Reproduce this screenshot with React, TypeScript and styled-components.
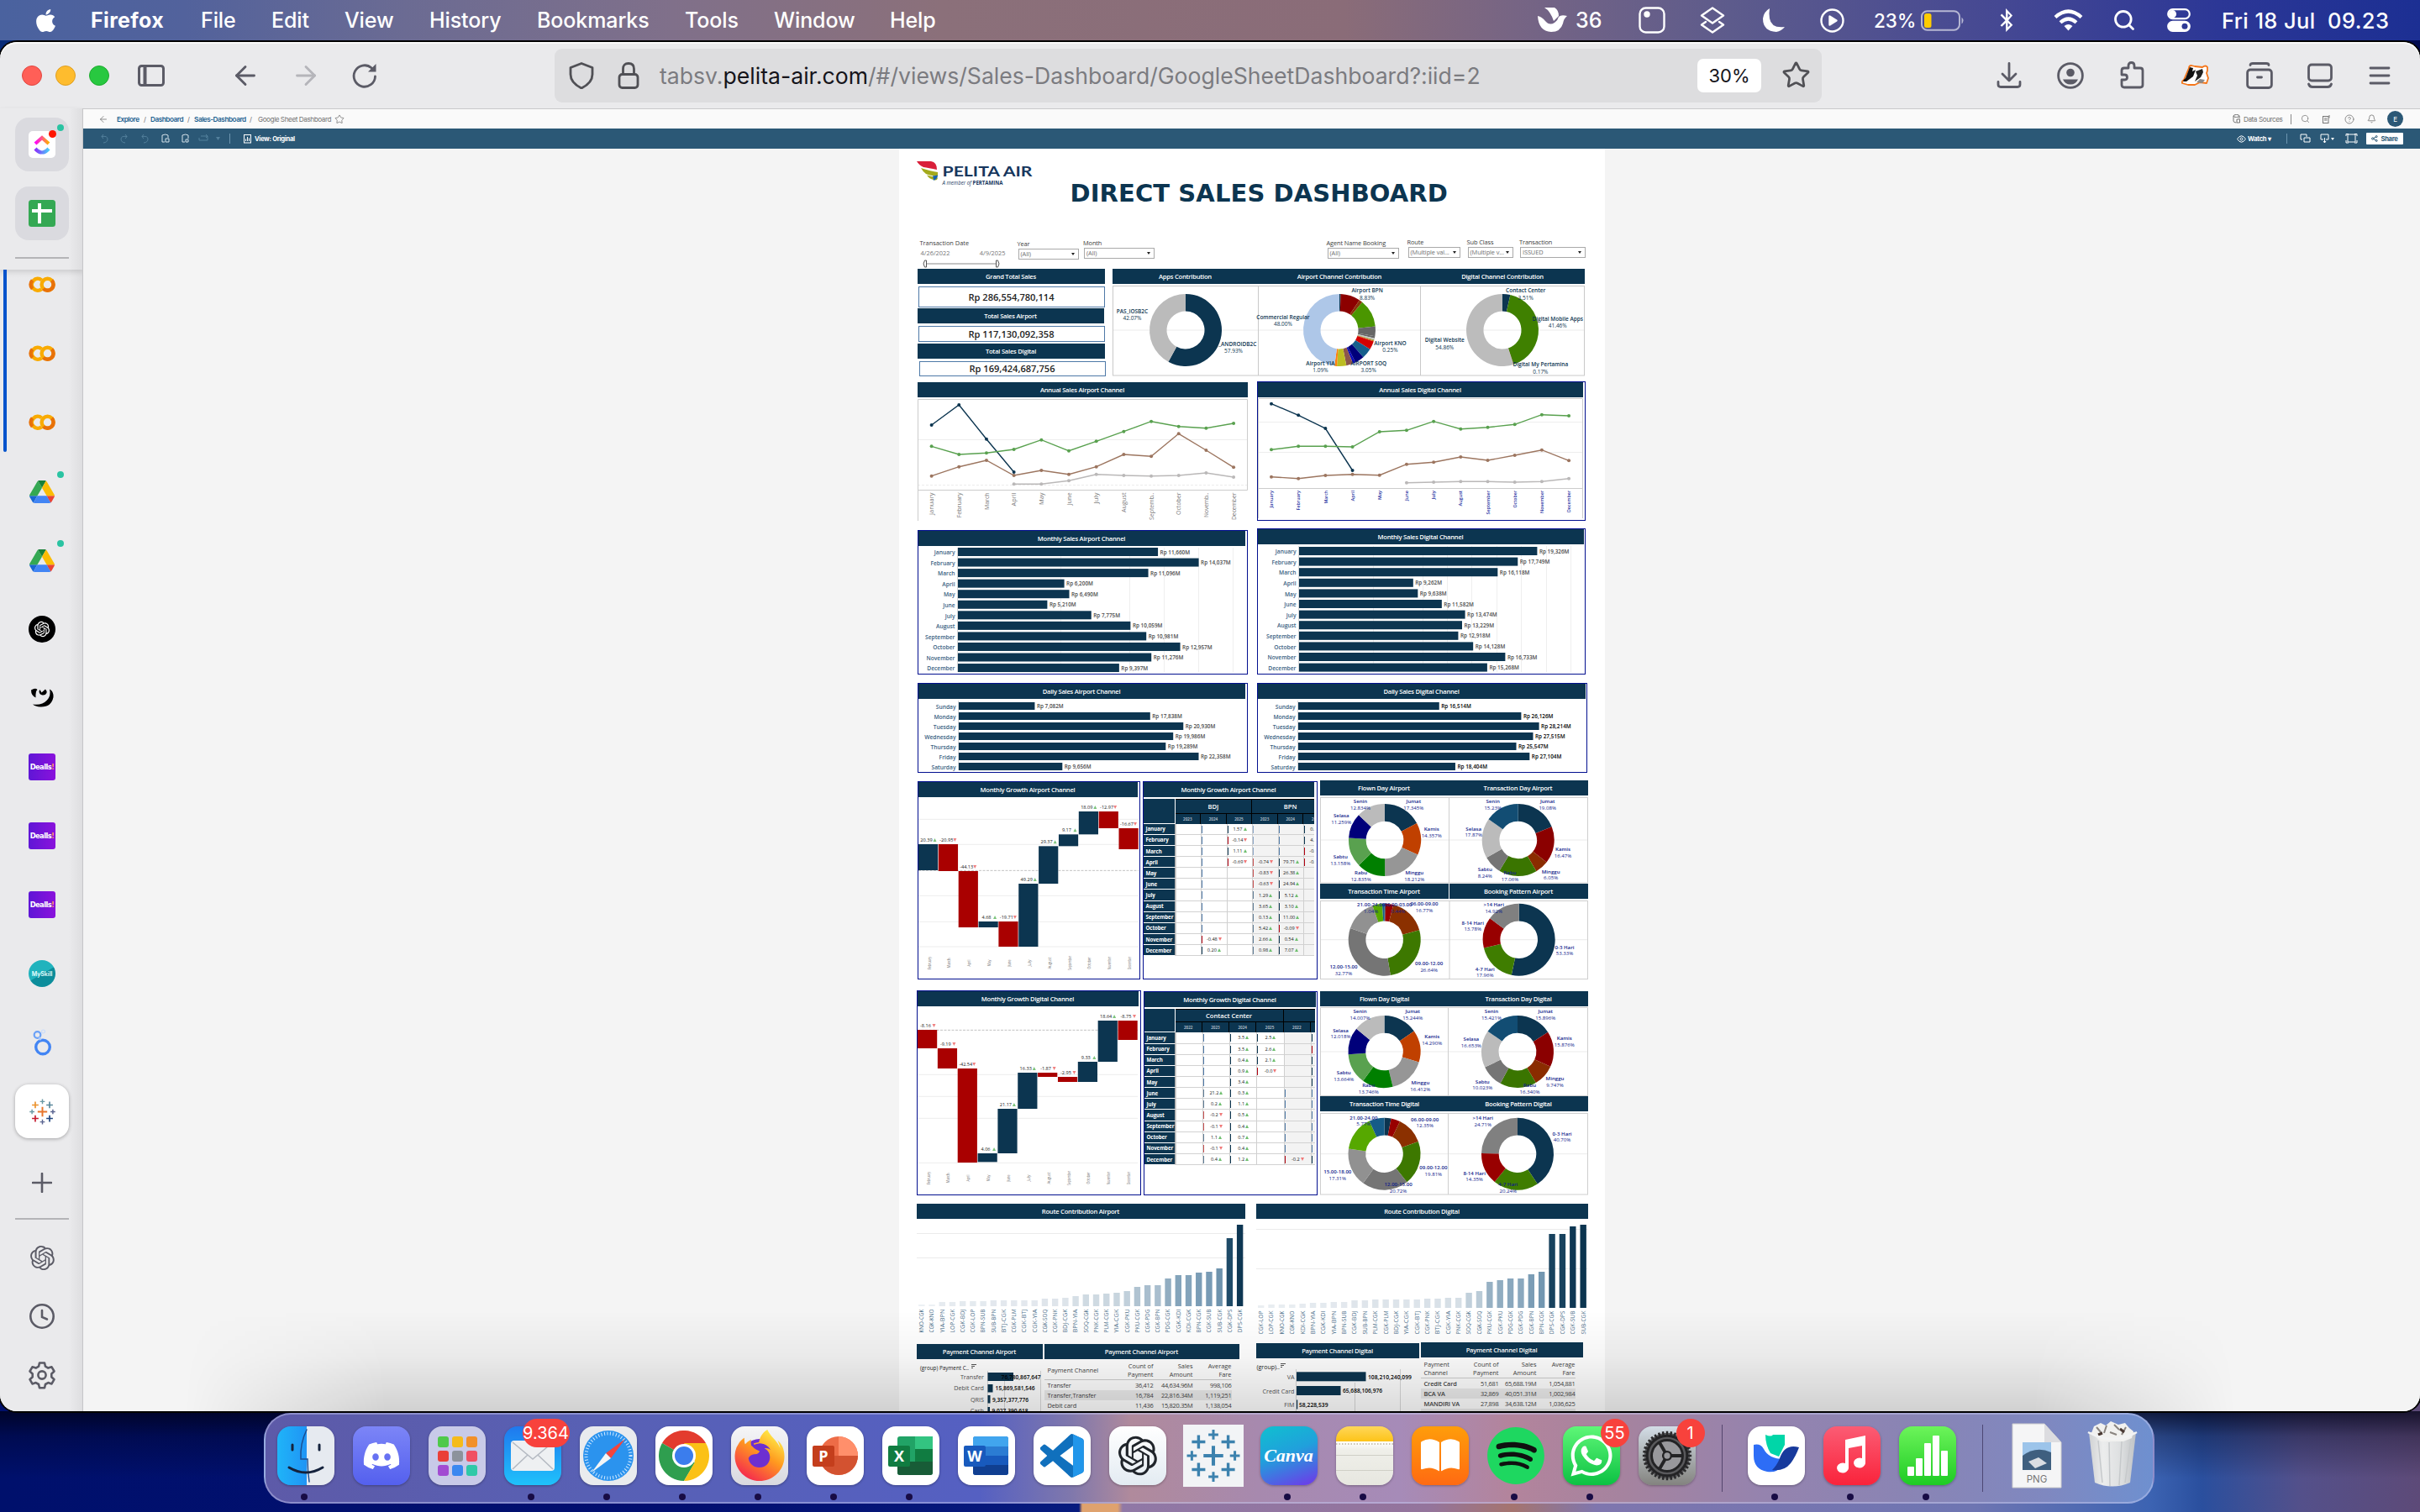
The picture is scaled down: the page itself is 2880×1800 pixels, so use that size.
import React from 'react';
import styled, { createGlobalStyle, css } from 'styled-components';
import { FaApple, FaDiscord, FaSpotify, FaWhatsapp, FaFirefoxBrowser, FaBluetoothB } from 'react-icons/fa';
import { RiOpenaiFill } from 'react-icons/ri';
import { ArrowLeft, ArrowRight, Star, CircleUserRound, Search, Bell, CircleHelp } from 'lucide-react';

const NAVY = '#0c3550';
const RED = '#a90000';
const INK = '#101c8c';
const UI = `Inter, "Liberation Sans", sans-serif`;
const VIZ = `"Open Sans", "Noto Sans", sans-serif`;

const Global = createGlobalStyle`
  * { box-sizing: border-box; }
  html, body { margin: 0; padding: 0; }
  body { width: 2880px; height: 1800px; overflow: hidden; font-family: ${UI}; }
  svg { display: block; }
`;

/* ---------- desktop ---------- */

const Desktop = styled.div`
  width: 2880px;
  height: 1800px;
  display: flex;
  flex-direction: column;
  overflow: hidden;
  background:
    linear-gradient(180deg, rgba(0, 0, 20, 0.75), rgba(0, 0, 20, 0.3) 30%, transparent 80%) 0 1680px / 100% 100px no-repeat,
    linear-gradient(90deg, #00106c 0, #020f70 800px, #071b7e 1284px, #dfa26e 1288px, #dfa26e 1330px, #9078a6 1336px, #94749c 1700px, #a5746f 1800px, #7f76ae 1900px, #6e75b2 2350px, #3c63b2 2560px, #2a4f9e 2620px, #54508a 2740px, #5d4a78 2880px) 0 1660px / 100% 140px no-repeat,
    linear-gradient(90deg, #062a78, #12356b 1100px, #7a4a2c 1130px, #7a4a2c 1900px, #0a2a66 1920px, #000a50);
`;

const MenuBar = styled.div`
  height: 48px;
  flex: none;
  display: flex;
  align-items: center;
  color: #fff;
  font-size: 25px;
  background: linear-gradient(90deg, #4a629f 0, #52629c 220px, #6b6b93 480px, #80708a 800px, #8b707a 1120px, #8a6c78 1600px, #776584 1800px, #5d5b8c 2060px, #454893 2380px, #2c3796 2640px, #1c2f93 2880px);
`;

const MenuItem = styled.span<{ $w: number; $bold?: boolean }>`
  width: ${p => p.$w}px;
  flex: none;
  white-space: pre;
  font-weight: ${p => (p.$bold ? 700 : 500)};
  letter-spacing: ${p => (p.$bold ? '0.35px' : '-0.1px')};
`;

const Slot = styled.span<{ $w: number; $pad?: number }>`
  width: ${p => p.$w}px;
  flex: none;
  display: flex;
  align-items: center;
  white-space: pre;
  font-weight: 500;
  padding-left: ${p => p.$pad ?? 0}px;
`;
const Clock = styled(Slot)`
  font-size: 25.500px;
  letter-spacing: 0.4px;
`;
const Percent = styled(Slot)`
  font-size: 22.500px;
`;
const Push = styled.span`flex: 1;`;

const Window = styled.div`
  margin-top: 2px;
  height: 1630px;
  flex: none;
  display: flex;
  flex-direction: column;
  background: #eaeaec;
  border-radius: 20px;
  overflow: hidden;
  box-shadow: 0 0 0 2px #000, inset 0 2px 0 #fafafa;
  position: relative;
`;

const Toolbar = styled.div`
  height: 79px;
  flex: none;
  display: flex;
  align-items: center;
  color: #5b5b66;
`;
const Light = styled.i<{ $c: string; $b: string }>`
  width: 24px;
  height: 24px;
  margin-right: 16px;
  border-radius: 50%;
  background: ${p => p.$c};
  border: 1px solid ${p => p.$b};
`;
const Lights = styled.div`
  display: flex;
  width: 164px;
  padding-left: 26px;
`;
const NavButtons = styled.div`
  width: 464px;
  flex: none;
  display: flex;
  align-items: center;
  padding-left: 78px;
  gap: 36px;
`;
const Forward = styled.span`
  color: #b5b5ba;
`;
const UrlBar = styled.div`
  width: 1508px;
  height: 64px;
  flex: none;
  display: flex;
  align-items: center;
  border-radius: 9px;
  background: #dddddf;
  color: #7b7b80;
  font-size: 26.600px;
`;
const UrlText = styled.span`
  flex: 1;
  padding-left: 13px;
  white-space: nowrap;
  b { font-weight: 400; color: #15141a; }
`;
const ZoomPill = styled.span`
  width: 76px;
  height: 40px;
  display: grid;
  place-items: center;
  border-radius: 7px;
  background: #fff;
  color: #15141a;
  font-size: 22px;
  margin-right: 24px;
`;
const ToolIcon = styled.span<{ $w?: number }>`
  width: ${p => p.$w ?? 73.3}px;
  flex: none;
  display: grid;
  place-items: center;
`;
const StarIcon = styled(ToolIcon)`
  color: #505055;
  justify-content: start;
`;
const Actions = styled.div`
  display: flex;
  align-items: center;
  margin-left: 186px;
`;

const Body = styled.div`
  flex: 1;
  display: flex;
  min-height: 0;
`;

/* ---------- sidebar ---------- */

const Side = styled.aside`
  width: 98px;
  flex: none;
  display: flex;
  flex-direction: column;
  align-items: center;
  background: linear-gradient(90deg, #eaeaec 0, #eaeaec 82px, #dedee0 98px);
  color: #5b5b66;
`;
const Pinned = styled.div`
  height: 192px;
  width: 98px;
  flex: none;
  padding: 11px 0 0 18px;
  display: flex;
  flex-direction: column;
  gap: 18px;
  box-shadow: 0 2px 6px rgba(0, 0, 0, 0.09);
`;
const Tab = styled.div<{ $bg: string; $shadow?: boolean }>`
  width: 64px;
  height: 64px;
  border-radius: 16px;
  background: ${p => p.$bg};
  display: grid;
  place-items: center;
  position: relative;
  flex: none;
  ${p => p.$shadow && css`box-shadow: 0 1px 4px rgba(0, 0, 0, 0.3);`}
`;
const Rule = styled.i<{ $mt?: number; $ml?: number }>`
  width: 64px;
  height: 2px;
  flex: none;
  margin: ${p => p.$mt ?? 0}px 0 0 ${p => p.$ml ?? 0}px;
  background: #b4b4b7;
`;
const TabList = styled.div`
  width: 98px;
  height: 1045px;
  flex: none;
  overflow: hidden;
  display: flex;
  background: linear-gradient(180deg, rgba(0, 0, 0, 0.045), transparent 10px);
`;
const Group = styled.i`
  width: 4px;
  height: 217px;
  margin-left: 4px;
  border-radius: 0 0 2px 2px;
  background: #0353cc;
`;
const Tabs = styled.div`
  width: 64px;
  margin: -23px 0 0 10px;
  display: flex;
  flex-direction: column;
`;
const TabSlot = styled.div`
  height: 82px;
  flex: none;
  display: grid;
  place-items: center;
  position: relative;
`;
const Dot = styled.i<{ $c?: string; $x: number; $y: number; $s?: number }>`
  position: absolute;
  left: ${p => p.$x}px;
  top: ${p => p.$y}px;
  width: ${p => p.$s ?? 8}px;
  height: ${p => p.$s ?? 8}px;
  border-radius: 50%;
  background: ${p => p.$c ?? '#2ac3a2'};
`;
const SideAction = styled.div<{ $h: number }>`
  height: ${p => p.$h}px;
  width: 64px;
  display: grid;
  place-items: center;
  flex: none;
  margin-left: 2px;
`;
const Dealls = styled.div`
  width: 32px;
  height: 32px;
  border-radius: 3px;
  display: grid;
  place-items: center;
  background: linear-gradient(90deg, #5f16d6, #8a12dc);
  color: #fff;
  font: 700 8.4px "DejaVu Sans", sans-serif;
  letter-spacing: -0.6px;
  b { color: #ff9a5c; }
`;
const MySkill = styled.div`
  width: 32px;
  height: 32px;
  border-radius: 50%;
  display: grid;
  place-items: center;
  background: linear-gradient(150deg, #21b3bd 50%, #0c8d9b 52%);
  color: #e8ffff;
  font: 600 7px Inter, sans-serif;
`;

const Colab = () => (
  <svg width="32" height="20" viewBox="0 0 32 20" fill="none" strokeWidth="4.4">
    <path d="M15.4 4.4A7 7 0 1 0 15.4 15.2" stroke="#f9ab00" />
    <path d="M4.6 4.8A7 7 0 0 0 4.6 14.8" stroke="#e8710a" />
    <circle cx="22.6" cy="9.8" r="7" stroke="#f9ab00" />
    <path d="M27.6 4.9A7 7 0 0 1 17.6 14.7" stroke="#e8710a" />
  </svg>
);
const Drive = () => (
  <svg width="30" height="27" viewBox="0 0 87.3 78">
    <path d="M6.6 66.85l3.85 6.65c.8 1.4 1.95 2.5 3.3 3.3L27.5 53H0c0 1.55.4 3.1 1.2 4.5z" fill="#1967d2" />
    <path d="M43.65 25L29.9 1.2c-1.35.8-2.5 1.9-3.3 3.3l-25.4 44A9.06 9.06 0 0 0 0 53h27.5z" fill="#34a853" />
    <path d="M73.55 76.8c1.35-.8 2.5-1.9 3.3-3.3l1.6-2.75L86.1 57.5c.8-1.4 1.2-2.95 1.2-4.5H59.8l5.85 11.5z" fill="#ea4335" />
    <path d="M43.65 25L57.4 1.2C56.05.4 54.5 0 52.9 0H34.4c-1.6 0-3.15.45-4.5 1.2z" fill="#188038" />
    <path d="M59.8 53H27.5L13.75 76.8c1.35.8 2.9 1.2 4.5 1.2h50.8c1.6 0 3.15-.45 4.5-1.2z" fill="#4285f4" />
    <path d="M73.4 26.5L60.7 4.5c-.8-1.4-1.95-2.5-3.3-3.3L43.65 25 59.8 53h27.45c0-1.55-.4-3.1-1.2-4.5z" fill="#fbbc04" />
  </svg>
);

const cross = (x: number, y: number, r: number, c: string, w: number) => (
  <path key={`${x}-${y}`} d={`M${x - r} ${y}H${x + r}M${x} ${y - r}V${y + r}`} stroke={c} strokeWidth={w} />
);
const Tableau = ({ size, mono }: { size: number; mono?: boolean }) => {
  const c = (v: string) => (mono ? '#3c82ae' : v);
  return (
    <svg width={size} height={size} viewBox="0 0 60 60" fill="none">
      {cross(30, 30, 11, c('#e8762c'), 3.8)}
      {cross(13.5, 14.5, 7.5, c('#eb912b'), 3.2)}
      {cross(46.5, 14.5, 7.5, c('#59879b'), 3.2)}
      {cross(13.5, 45.5, 7.5, c('#c5192d'), 3.2)}
      {cross(46.5, 45.5, 7.5, c('#1f447e'), 3.2)}
      {cross(30, 6.5, 5.5, c('#6a99a5'), 2.8)}
      {cross(30, 53.5, 5.5, c('#5b6591'), 2.8)}
      {cross(6, 30, 5.5, c('#6a99a5'), 2.8)}
      {cross(54, 30, 5.5, c('#5b6591'), 2.8)}
    </svg>
  );
};

function Sidebar() {
  return (
    <Side>
      <Pinned>
        <Tab $bg="#dadadf">
          <svg width="32" height="32" viewBox="0 0 32 32">
            <defs>
              <linearGradient id="cu1"><stop offset="0" stopColor="#f0f" /><stop offset="1" stopColor="#ffb300" /></linearGradient>
              <linearGradient id="cu2"><stop offset="0" stopColor="#8930fd" /><stop offset="1" stopColor="#49ccf9" /></linearGradient>
            </defs>
            <rect width="32" height="32" rx="5" fill="#fff" />
            <path d="M8 15l8-7 8 7" fill="none" stroke="url(#cu1)" strokeWidth="4.2" />
            <path d="M8 21q8 9 16 0" fill="none" stroke="url(#cu2)" strokeWidth="4.2" />
          </svg>
          <Dot $c="#ff1500" $x={40} $y={15} $s={9} />
          <Dot $x={50} $y={8} />
        </Tab>
        <Tab $bg="#dadadf">
          <svg width="32" height="32" viewBox="0 0 32 32">
            <rect width="32" height="32" rx="3.5" fill="#34a853" />
            <path d="M4 13h24M13 4v24" stroke="#fff" strokeWidth="4" />
          </svg>
        </Tab>
        <Rule $mt={2} />
      </Pinned>
      <TabList>
        <Group />
        <Tabs>
          <TabSlot><Colab /></TabSlot>
          <TabSlot><Colab /></TabSlot>
          <TabSlot><Colab /></TabSlot>
          <TabSlot><Drive /><Dot $x={50} $y={17} /></TabSlot>
          <TabSlot><Drive /><Dot $x={50} $y={17} /></TabSlot>
          <TabSlot>
            <svg width="32" height="32" viewBox="0 0 32 32"><circle cx="16" cy="16" r="16" fill="#000" /><g transform="translate(5 5)"><RiOpenaiFill size={22} color="#fff" /></g></svg>
          </TabSlot>
          <TabSlot>
            <svg width="28" height="26" viewBox="0 0 28 26">
              <path d="M1 3.500Q6 .5 8.500 3Q6 5 6.500 12.500Q1 10 1 3.500z" />
              <path d="M11.500 3l2 3.500 4.500-4a5 5 0 0 1 1.500 4.500 4.800 4.800 0 0 1-9-1.500q0-1.500 1-2.500z" />
              <path d="M23 2.500Q28 5 27.500 12Q25 24 12 23.500Q6 23 3 20.500Q14 22 20 15.500Q25 10 23 2.500z" />
            </svg>
          </TabSlot>
          {[0, 1, 2].map(i => <TabSlot key={i}><Dealls><span>Dealls<b>!</b></span></Dealls></TabSlot>)}
          <TabSlot><MySkill>MySkill</MySkill></TabSlot>
          <TabSlot>
            <svg width="24" height="32" viewBox="0 0 24 32" fill="none">
              <circle cx="13" cy="21.500" r="8.300" stroke="#4285f4" strokeWidth="3.400" />
              <circle cx="6.500" cy="7" r="3.800" stroke="#6ba1f7" strokeWidth="2.200" />
              <circle cx="13.500" cy="3" r="2" stroke="#c9dcfb" strokeWidth="1.200" />
              <path d="M8.500 10l2 3" stroke="#aecbfa" strokeWidth="2.500" />
            </svg>
          </TabSlot>
          <TabSlot><Tab $bg="#fff" $shadow><Tableau size={31} /></Tab></TabSlot>
        </Tabs>
      </TabList>
      <SideAction $h={84}>
        <svg width="24" height="24" viewBox="0 0 24 24" stroke="#5b5b66" strokeWidth="2.600" strokeLinecap="round"><path d="M1 12h22M12 1v22" /></svg>
      </SideAction>
      <Rule $ml={2} />
      <SideAction $h={90}><RiOpenaiFill size={35} /></SideAction>
      <SideAction $h={50}>
        <svg width="32" height="32" viewBox="0 0 32 32" fill="none" stroke="#5b5b66" strokeWidth="2.600" strokeLinecap="round"><circle cx="16" cy="16" r="13.700" /><path d="M16 9v8l6 2.500" /></svg>
      </SideAction>
      <SideAction $h={90}>
        <svg width="34" height="34" viewBox="0 0 34 34" fill="none" stroke="#5b5b66" strokeWidth="2.600" strokeLinejoin="round">
          <circle cx="17" cy="17" r="4.600" />
          <path d="M14 2.500h6l1 4.200 3.300 1.900 4.200-1.300 3 5.200-3.200 3v3.700l3.200 3-3 5.200-4.200-1.300-3.300 1.900-1 4.200h-6l-1-4.200-3.300-1.900-4.200 1.300-3-5.200 3.200-3v-3.700l-3.200-3 3-5.200 4.200 1.300L13 6.700z" />
        </svg>
      </SideAction>
    </Side>
  );
}

/* ---------- tableau chrome ---------- */

const Main = styled.main`
  flex: 1;
  display: flex;
  flex-direction: column;
  min-width: 0;
  border-left: 1px solid #c6c6c8;
  border-top: 1px solid #c9c9cb;
  font-family: ${VIZ};
`;
const Crumbs = styled.div`
  height: 23px;
  flex: none;
  display: flex;
  align-items: center;
  background: #fafafa;
  padding: 0 20px 0 18px;
  font: 400 8.200px ${UI};
  letter-spacing: -0.45px;
  color: #757575;
`;
const Crumb = styled.span<{ $w: number; $link?: boolean; $pad?: number }>`
  width: ${p => p.$w}px;
  padding-left: ${p => p.$pad ?? 0}px;
  white-space: nowrap;
  ${p => p.$link && css`color: #1b5f8f; font-weight: 600;`}
`;
const Ribbon = styled.div`
  height: 24px;
  flex: none;
  display: flex;
  align-items: center;
  background: #2b5876;
  color: #fff;
  padding: 0 20px 0 18px;
  font: 700 7.600px ${UI};
  letter-spacing: -0.3px;
`;
const ViewName = styled.span`
  padding-left: 4px;
`;
const Bar = styled.i<{ $c: string; $h: number }>`
  width: 1px;
  height: ${p => p.$h}px;
  background: ${p => p.$c};
`;
const Share = styled.span`
  width: 44px;
  height: 14px;
  background: #fff;
  color: #2b5876;
  border-radius: 1px;
  display: flex;
  align-items: center;
  justify-content: center;
  gap: 3px;
`;
const Avatar = styled.span`
  width: 19px;
  height: 19px;
  margin-left: 10px;
  border-radius: 50%;
  background: #2b5876;
  color: #fff;
  display: grid;
  place-items: center;
  font-size: 8px;
`;
const Canvas = styled.div`
  flex: 1;
  display: flex;
  justify-content: center;
  background: #f4f4f4;
  overflow: hidden;
`;
const BottomShade = styled.div`
  position: absolute;
  left: 0;
  right: 0;
  bottom: 0;
  height: 120px;
  background: linear-gradient(180deg, transparent, rgba(0, 0, 0, 0.04) 45%, rgba(0, 0, 0, 0.14));
  mask-image: linear-gradient(90deg, transparent 220px, #000 460px, #000 2420px, transparent 2660px);
`;

/* ---------- dashboard sheet ---------- */

const Sheet = styled.div`
  width: 840px;
  height: 1503px;
  background: #fff;
  overflow: hidden;
  color: #333;
`;
const Head = styled.header`
  height: 108px;
  display: flex;
  padding-left: 21px;
`;
const Logo = styled.div`
  width: 183px;
  padding-top: 14px;
`;
const Title = styled.h1`
  margin: 35px 0 0;
  font: 700 29px/36px "DejaVu Sans", Verdana, sans-serif;
  letter-spacing: 0.1px;
  white-space: nowrap;
  color: ${NAVY};
`;
const Filters = styled.div`
  height: 35px;
  display: flex;
  padding-left: 25px;
`;
const Filter = styled.label<{ $w: number; $mr: number; $mt: number }>`
  width: ${p => p.$w}px;
  margin: ${p => p.$mt}px ${p => p.$mr}px 0 0;
  flex: none;
  display: block;
  font-size: 7.400px;
  line-height: 9px;
  letter-spacing: -0.1px;
  white-space: nowrap;
  color: #3c3c3c;
`;
const Select = styled.div`
  height: 13px;
  margin: 1px 0 0 1px;
  border: 1px solid #a9a9a9;
  display: flex;
  align-items: center;
  justify-content: space-between;
  padding: 0 4px 0 2px;
  color: #707070;
  i { border: 2px solid transparent; border-top: 3px solid #222; border-bottom: 0; }
`;
const DateRange = styled.div`
  width: 116px;
  flex: none;
  font-size: 7.400px;
  line-height: 9px;
  color: #3c3c3c;
`;
const Dates = styled.div`
  display: flex;
  justify-content: space-between;
  width: 101px;
  margin: 3px 0 3px 1px;
  color: #757575;
`;

const Row = styled.section<{ $mt: number; $pl: number; $h: number }>`
  display: flex;
  align-items: flex-start;
  height: ${p => p.$h}px;
  margin-top: ${p => p.$mt}px;
  padding-left: ${p => p.$pl}px;
`;
const Panel = styled.div<{ $w: number; $h: number; $mt?: number; $mr?: number; $outline?: boolean }>`
  width: ${p => p.$w}px;
  height: ${p => p.$h}px;
  margin: ${p => p.$mt ?? 0}px ${p => p.$mr ?? 0}px 0 0;
  flex: none;
  overflow: hidden;
  border: ${p => (p.$outline ? '1px solid #020f8f' : '0')};
`;
const Band = styled.h2<{ $w: number; $mt?: number }>`
  width: ${p => p.$w}px;
  height: 18px;
  margin: ${p => p.$mt ?? 0}px 0 0;
  background: ${NAVY};
  color: #fff;
  font: 600 7.600px/18px ${VIZ};
  letter-spacing: -0.24px;
  text-align: center;
  white-space: nowrap;
`;
const BandRow = styled.div<{ $gap?: number }>`
  display: flex;
  gap: ${p => p.$gap ?? 0}px;
`;
const Kpi = styled.div<{ $h: number; $ml: number }>`
  height: ${p => p.$h}px;
  width: 222px;
  margin: 3px 0 1px ${p => p.$ml}px;
  border: 1px solid #4e79a7;
  display: grid;
  place-items: center;
  font: 600 11.100px/1 ${VIZ};
  color: #222;
`;

type ChartProps = { x: number; y: number; w: number; h: number; children: React.ReactNode };
const Chart = ({ x, y, w, h, children }: ChartProps) => (
  <svg width={w} height={h} viewBox={`${x} ${y} ${w} ${h}`} fontFamily={'"Open Sans", "Noto Sans", sans-serif'}>
    {children}
  </svg>
);

type LabelProps = { x: number; y: number; t: string; s?: number; c?: string; a?: 'start' | 'middle' | 'end'; b?: number; w?: number; up?: boolean };
const Label = ({ x, y, t, s = 7, c = NAVY, a = 'middle', b = 600, w, up }: LabelProps) => (
  <text
    x={x}
    y={y}
    fontSize={s}
    fill={c}
    textAnchor={a}
    fontWeight={b}
    dy="0.36em"
    textLength={w}
    lengthAdjust={w ? 'spacingAndGlyphs' : undefined}
    transform={up ? `rotate(-90 ${x} ${y})` : undefined}
  >
    {t}
  </text>
);

const project = (ox: number, oy: number, kx: number, ky: number) => (x: number, y: number): [number, number] => [ox + x / kx, oy + y / ky];

type Slice = [number, string];
function Donut({ cx, cy, r = 43, ri = 22.500, slices }: { cx: number; cy: number; r?: number; ri?: number; slices: Slice[] }) {
  const total = slices.reduce((a, s) => a + s[0], 0);
  let at = 0;
  const p = (f: number, q: number) => {
    const t = f * Math.PI * 2;
    return `${(cx + Math.sin(t) * q).toFixed(2)} ${(cy - Math.cos(t) * q).toFixed(2)}`;
  };
  return (
    <g>
      {slices.map(([v, c], i) => {
        const a = at / total;
        at += v;
        const b = at / total;
        const big = b - a > 0.5 ? 1 : 0;
        return <path key={i} fill={c} d={`M${p(a, r)}A${r} ${r} 0 ${big} 1 ${p(b, r)}L${p(b, ri)}A${ri} ${ri} 0 ${big} 0 ${p(a, ri)}Z`} />;
      })}
    </g>
  );
}

type Tag = [number, number, string, string, number?];
const Tags = ({ items, at, dy, s, c }: { items: Tag[]; at: (x: number, y: number) => [number, number]; dy: number; s: number; c: string }) => (
  <>
    {items.map(([x, y, name, pct, px]) => {
      const [a, b] = at(x, y);
      const [q] = at(px ?? x, y);
      return (
        <g key={name + x}>
          <Label x={a} y={b} t={name} s={s} c={c} b={600} />
          <Label x={q} y={b + dy} t={pct} s={s} c={c} b={500} />
        </g>
      );
    })}
  </>
);

/* contribution donuts */

const APPS: Slice[] = [[57.93, NAVY], [42.07, '#bbbbbb']];
const AIRPORT: Slice[] = [[0.6, NAVY], [8.83, '#8c0000'], [1.5, '#8a3208'], [12.5, '#4a9600'], [4.4, '#666666'], [0.9, '#666'], [0.6, '#c7c7c7'], [0.5, '#98a860'], [0.4, '#d06a00'], [3.8, '#d40000'], [4.6, '#165f8c'], [4.2, '#00007a'], [1.2, '#0808b8'], [3.05, '#8c564b'], [4.2, '#bcbd22'], [1.09, '#ff7f0e'], [48, '#aec7e8']];
const DIGITAL: Slice[] = [[3.51, NAVY], [41.46, '#3f8000'], [0.17, '#8c564b'], [54.86, '#bcbcbc']];
const TOP_TAGS: Tag[] = [
  [518, 571, 'PAS_IOSB2C', '42.07%'],
  [752, 688, '_ANDROIDB2C', '57.93%', 743],
  [853, 592, 'Commercial Regular', '48.00%'],
  [1040, 498, 'Airport BPN', '8.83%'],
  [1091, 686, 'Airport KNO', '0.25%'],
  [1043, 758, 'AIRPORT SOQ', '3.05%'],
  [936, 758, 'Airport YIA', '1.09%'],
  [1392, 498, 'Contact Center', '3.51%'],
  [1463, 598, 'Digital Mobile Apps', '41.46%'],
  [1212, 675, 'Digital Website', '54.86%'],
  [1425, 762, 'Digital My Pertamina', '0.17%'],
];

const Contribution = () => (
  <Panel $w={562} $h={128}>
    <BandRow><Band $w={174}>Apps Contribution</Band><Band $w={193}>Airport Channel Contribution</Band><Band $w={195}>Digital Channel Contribution</Band></BandRow>
    <Chart x={1324} y={338} w={562} h={110}>
      <path d="M1324 393H1886" stroke="#ebebeb" />
      <rect x="1324.500" y="340.500" width="561" height="106.500" fill="none" stroke="#c9c9c9" />
      <path d="M1497.500 340V447M1690.500 340V447" stroke="#c9c9c9" />
      <Donut cx={1411} cy={393} slices={APPS} />
      <Donut cx={1594} cy={393} slices={AIRPORT} />
      <Donut cx={1788} cy={393} slices={DIGITAL} />
      <Tags items={TOP_TAGS} at={project(1070, 180, 1.8667, 3)} dy={8.400} s={6.500} c={NAVY} />
    </Chart>
  </Panel>
);

/* annual lines */

const MONTHS = ['January', 'February', 'March', 'April', 'May', 'June', 'July', 'August', 'September', 'October', 'November', 'December'];
const DAYS = ['Sunday', 'Monday', 'Tuesday', 'Wednesday', 'Thursday', 'Friday', 'Saturday'];

type Series = { c: string; from: number; y: number[] };
const ANNUAL_AIRPORT: Series[] = [
  { c: '#bab8b8', from: 3, y: [103.3, 103.3, 99.3, 91.7, 93, 93.7, 93, 90, 95] },
  { c: NAVY, from: 0, y: [33, 9, 49.7, 89] },
  { c: '#9c755f', from: 0, y: [93.7, 82.7, 75, 93, 87, 91.7, 82.7, 68, 70.3, 43.3, 63, 83.3] },
  { c: '#59a14f', from: 0, y: [58.3, 68, 66.3, 62, 50.7, 63.7, 52.3, 40.7, 28.7, 34.7, 36.7, 31] },
];
const ANNUAL_DIGITAL: Series[] = [
  { c: '#bab8b8', from: 5, y: [101.7, 101, 100.3, 100.3, 101, 100.3, 96.7] },
  { c: NAVY, from: 0, y: [7.7, 21.3, 37, 87] },
  { c: '#9c755f', from: 0, y: [94.7, 96.7, 93, 91.7, 92.7, 79.7, 77.3, 71, 75, 69, 62.7, 75.3] },
  { c: '#59a14f', from: 0, y: [62.3, 58.3, 58.3, 59, 41, 39.3, 28.7, 37.7, 35.7, 32.3, 20.7, 22] },
];
const Lines = ({ data, x0, step }: { data: Series[]; x0: number; step: number }) => (
  <>
    {data.map(s => (
      <g key={s.c}>
        <polyline fill="none" stroke={s.c} strokeWidth="1.400" points={s.y.map((v, i) => `${x0 + (i + s.from) * step},${v}`).join(' ')} />
        {s.y.map((v, i) => <circle key={i} cx={x0 + (i + s.from) * step} cy={v} r="2" fill={s.c} />)}
      </g>
    ))}
  </>
);
const SHORT: Record<string, string> = { September: 'Septemb..', November: 'Novemb..' };
const LONG_W = [26.5, 30, 20.5, 16, 14.5, 15, 13, 23.5, 32.5, 26.5, 29.5, 32.5];
const SMALL_W = [20.5, 23.5, 15.5, 12.5, 11, 12, 10.5, 18.5, 28.5, 20.5, 27, 26];

/* horizontal bars */

type HBarsProps = { names: string[]; values: number[]; x: number; y0: number; step: number; h: number; unit: number; ink: string; box: [number, number, number, number]; grid: number[] };
const HBars = ({ names, values, x, y0, step, h, unit, ink, box, grid }: HBarsProps) => (
  <Chart x={box[0]} y={box[1]} w={box[2]} h={box[3]}>
    {grid.map(g => <path key={g} d={`M${g} ${box[1] + 2}V${box[1] + box[3] - 2}`} stroke="#efefef" />)}
    <path d={`M${x - 0.5} ${box[1] + 2}V${box[1] + box[3] - 2}`} stroke="#d8d8d8" />
    {values.map((v, i) => {
      const cy = y0 + step * i;
      const w = v * unit;
      return (
        <g key={names[i]}>
          <Label x={x - 3.500} y={cy + 0.8} t={names[i]} a="end" s={6.700} c="#38607f" b={600} />
          <rect x={x} y={cy - h / 2} width={w} height={h} fill={NAVY} />
          <Label x={x + w + 2.500} y={cy} t={`Rp ${v.toLocaleString('en-US')}M`} a="start" s={7.300} c={ink} b={600} w={v > 9999 ? 35.600 : 31.800} />
        </g>
      );
    })}
  </Chart>
);

/* waterfall */

type Step = [number, number, string];
const FALL_AIRPORT: Step[] = [[255, 348, '20.39'], [255, 351, '-20.95'], [351, 552, '-44.13'], [531, 552, '4.68'], [531, 621, '-19.71'], [396, 621, '49.29'], [262, 396, '29.37'], [220, 262, '9.17'], [138, 220, '18.09'], [138, 198, '-12.97'], [198, 273, '-16.67']];
const FALL_DIGITAL: Step[] = [[168, 234, '-8.16'], [234, 306, '-9.19'], [306, 642, '-42.54'], [609, 640, '4.06'], [450, 609, '21.17'], [321, 450, '16.33'], [321, 336, '-1.87'], [336, 354, '-2.95'], [282, 354, '9.33'], [135, 282, '18.64'], [135, 204, '-8.75']];
const FALL_W = [15, 12, 8, 8, 8, 8, 14, 17, 14, 15, 15];

const Waterfall = ({ data, oy, x0, top, grid, zero, axis, h }: { data: Step[]; oy: number; x0: number; top: number; grid: number[]; zero: number; axis: number; h: number }) => (
  <Chart x={x0} y={top} w={262} h={h}>
    {grid.map(g => <path key={g} d={`M${x0} ${oy + g / 3}h262`} stroke="#ededed" />)}
    <path d={`M${x0} ${oy + zero / 3}h262`} stroke="#c2c2c2" strokeDasharray="3 1.500" />
    {data.map(([a, b, t], i) => {
      const x = x0 + 23.85 * i;
      const y = oy + a / 3;
      const neg = t.startsWith('-');
      const ly = y - 5;
      const tx = x + 19.500;
      return (
        <g key={i}>
          <rect x={x} y={y} width={23.200} height={(b - a) / 3} fill={neg ? RED : NAVY} />
          <Label x={x + 9.500} y={ly} t={t} s={5.600} c="#222" b={500} />
          <path d={neg ? `M${tx - 2} ${ly - 2}h4l-2 4z` : `M${tx - 2} ${ly + 2}h4l-2-4z`} fill={neg ? '#f08080' : '#7cc47c'} />
          <Label x={x + 13} y={axis - 6.500} t={MONTHS[i + 1]} s={4.600} c="#777" b={400} up w={FALL_W[i]} />
        </g>
      );
    })}
  </Chart>
);

/* pivot */

const Pivot = styled.div<{ $first: number; $col: number; $top: number; $sub: number; $row: number }>`
  display: grid;
  width: 203px;
  overflow: hidden;
  margin-top: 2px;
  grid-template-columns: ${p => p.$first}px repeat(6, ${p => p.$col}px);
  grid-template-rows: ${p => p.$top}px ${p => p.$sub}px repeat(12, ${p => p.$row}px);
`;
const Corner = styled.div`
  grid-row: span 2;
  background: ${NAVY};
  border-bottom: 1px solid #fff;
  border-right: 1px solid #fff;
`;
const Region = styled.div<{ $span: number }>`
  grid-column: span ${p => p.$span};
  background: ${NAVY};
  border-top: 1px solid #000;
  border-right: 1px solid #000;
  border-bottom: 1px solid #000;
  color: #fff;
  font-size: 7.600px;
  font-weight: 600;
  display: grid;
  place-items: center;
`;
const Year = styled.div`
  background: ${NAVY};
  border-right: 1px solid #000;
  color: #c3ced8;
  font-size: 4.600px;
  font-weight: 600;
  display: grid;
  place-items: center;
`;
const Month = styled.div`
  background: ${NAVY};
  border-bottom: 1px solid #fff;
  border-right: 1px solid #aaa;
  color: #fff;
  font-size: 6.200px;
  letter-spacing: -0.1px;
  font-weight: 700;
  display: flex;
  align-items: center;
  padding-left: 3px;
`;
const Cell = styled.div<{ $mark?: string; $alt?: boolean }>`
  display: flex;
  align-items: center;
  justify-content: center;
  gap: 1px;
  background: ${p => (p.$alt ? '#f3f3f3' : '#fff')};
  border-bottom: 1px solid #d2d2d2;
  border-left: 1px solid #cfcfcf;
  background-image: ${p => (p.$mark ? `linear-gradient(${p.$mark}, ${p.$mark})` : 'none')};
  background-repeat: no-repeat;
  background-size: 1px 9px;
  background-position: 0 2px;
  background-origin: padding-box;
  font-size: 5.600px;
  color: #222;
  overflow: hidden;
`;
const Tri = styled.i<{ $up: boolean }>`
  border: 2px solid transparent;
  ${p => (p.$up ? css`border-bottom: 4px solid #6fbf6f; border-top: 0;` : css`border-top: 4px solid #f07878; border-bottom: 0;`)}
`;

const PIVOT_AIRPORT: string[][] = [
  ['', 'b', '1.57', 'l', 'b', '0.65'],
  ['', 'b', '-0.14', 'l', 'b', '4.80'],
  ['', 'b', '1.11', 'l', 'b', '-0.12'],
  ['', 'b', '-0.69', '-0.74', '79.71', '-0.45'],
  ['', 'b', '', '-0.83', '26.38', ''],
  ['', 'b', '', '-0.63', '24.94', ''],
  ['', 'b', '', '1.29', '5.12', ''],
  ['', 'b', '', '3.65', '3.10', ''],
  ['', 'b', '', '0.13', '11.00', ''],
  ['', 'b', '', '5.42', '-0.09', ''],
  ['', '-0.48', '', '2.66', '0.54', ''],
  ['', '0.20', '', '0.98', '7.07', ''],
];
const PIVOT_DIGITAL: string[][] = [
  ['', 'b', '3.5', '2.5', '', 'n'],
  ['', 'b', '3.5', '2.6', '', 'r'],
  ['', 'b', '0.4', '2.1', '', 'n'],
  ['', 'b', '0.9', '-0.0', '', 'n'],
  ['', 'b', '3.4', '', '', 'n'],
  ['', '21.2', '0.3', '', 'b', 'b'],
  ['', '0.2', '1.1', '', 'b', 'b'],
  ['', '-0.2', '0.5', '', 'b', 'b'],
  ['', '-0.1', '0.4', '', 'b', 'b'],
  ['', '1.1', '0.7', '', 'b', 'b'],
  ['', '-0.1', '0.4', '', 'b', 'b'],
  ['', '0.4', '1.2', '', '-0.2', 'n'],
];
const MARKS: Record<string, string> = { b: '#4e79a7', l: '#8aa6c6', n: NAVY, r: '#b00010' };
const cells = (rows: string[][], altFrom: number, faded: number) =>
  rows.map((r, i) => (
    <React.Fragment key={i}>
      <Month>{MONTHS[i]}</Month>
      {r.map((v, j) => {
        const word = v in MARKS;
        const neg = v.startsWith('-');
        const mark = !v ? undefined : word ? MARKS[v] : neg ? (j === faded ? '#c65050' : '#b00010') : j === faded ? '#5d7b94' : NAVY;
        return (
          <Cell key={j} $mark={mark} $alt={j >= altFrom}>
            {!word && v ? <>{v}<Tri $up={!neg} /></> : null}
          </Cell>
        );
      })}
    </React.Fragment>
  ));

/* small donuts */

type Quad = { cx: number; cy: number; slices: Slice[]; tags: Tag[] };
const day7 = (v: number[]): Slice[] => ['#0c3550', '#c04000', '#969696', '#007f00', '#59a14f', '#00007a', '#bbbbbb'].map((c, i) => [v[i], c] as Slice);
const trx7 = (v: number[]): Slice[] => ['#0c3550', '#8b0000', '#8a2c00', '#3a7500', '#757575', '#bbbbbb', '#124d73'].map((c, i) => [v[i], c] as Slice);
const time8 = (v: number[]): Slice[] => [NAVY, '#980000', '#8b3000', '#3d7800', '#757575', '#919191', '#56a800', '#165c88'].map((c, i) => [v[i], c] as Slice);
const book4 = (v: number[]): Slice[] => [NAVY, '#3f7d00', '#980000', '#808080'].map((c, i) => [v[i], c] as Slice);

const QUAD_AIRPORT: Quad[] = [
  { cx: 1648, cy: 1000, slices: day7([17.345, 14.357, 18.212, 12.835, 13.158, 11.259, 12.834]), tags: [[367, 102, 'Jumat', '17.345%'], [431, 201, 'Kamis', '14.357%'], [370, 357, 'Minggu', '18.212%'], [179, 357, 'Rabu', '12.835%'], [106, 299, 'Sabtu', '13.158%'], [109, 153, 'Selasa', '11.259%'], [177, 102, 'Senin', '12.834%']] },
  { cx: 1806.7, cy: 1000, slices: trx7([19.08, 16.47, 6.05, 17.06, 8.24, 17.87, 15.23]), tags: [[845, 102, 'Jumat', '19.08%'], [900, 272, 'Kamis', '16.47%'], [857, 352, 'Minggu', '6.05%'], [711, 357, 'Rabu', '17.06%'], [622, 345, 'Sabtu', '8.24%'], [581, 199, 'Selasa', '17.87%'], [650, 102, 'Senin', '15.23%']] },
  { cx: 1647.7, cy: 1118.7, slices: time8([0.44, 3.5, 16.77, 26.64, 32.77, 14.5, 4.34, 1.04]), tags: [[215, 471, '21.00-24.00', '1.04%'], [312, 471, '00.00-03.00', '0.44%'], [405, 467, '06.00-09.00', '16.77%'], [422, 680, '09.00-12.00', '26.64%'], [117, 692, '12.00-15.00', '32.77%']] },
  { cx: 1807.7, cy: 1118.7, slices: book4([53.33, 17.96, 13.78, 14.92]), tags: [[653, 471, '>14 Hari', '14.92%'], [578, 535, '8-14 Hari', '13.78%'], [906, 622, '0-3 Hari', '53.33%'], [622, 700, '4-7 Hari', '17.96%']] },
];
const QUAD_DIGITAL: Quad[] = [
  { cx: 1647.5, cy: 1252, slices: day7([15.244, 14.29, 16.412, 13.746, 13.664, 12.018, 14.007]), tags: [[1024, 102, 'Senin', '14.007%'], [1141, 102, 'Jumat', '15.244%'], [981, 169, 'Selasa', '12.018%'], [1184, 192, 'Kamis', '14.290%'], [988, 321, 'Sabtu', '13.664%'], [1043, 366, 'Rabu', '13.746%'], [1158, 356, 'Minggu', '16.412%']] },
  { cx: 1806, cy: 1252, slices: trx7([15.896, 15.876, 9.747, 16.34, 10.023, 16.653, 15.421]), tags: [[1316, 102, 'Senin', '15.421%'], [1436, 102, 'Jumat', '15.896%'], [1271, 201, 'Selasa', '16.653%'], [1478, 198, 'Kamis', '15.876%'], [1296, 352, 'Sabtu', '10.023%'], [1401, 366, 'Rabu', '16.340%'], [1457, 342, 'Minggu', '9.747%']] },
  { cx: 1647.5, cy: 1373.7, slices: time8([3, 4.1, 12.35, 19.81, 20.72, 17.31, 15.9, 6.8]), tags: [[1032, 481, '21.00-24.00', '5.77%'], [1168, 487, '06.00-09.00', '12.35%'], [1187, 660, '09.00-12.00', '19.81%'], [1109, 720, '12.00-15.00', '20.72%'], [974, 674, '15.00-18.00', '17.31%']] },
  { cx: 1806, cy: 1373.7, slices: book4([40.7, 20.24, 14.35, 24.71]), tags: [[1297, 482, '>14 Hari', '24.71%'], [1473, 538, '0-3 Hari', '40.70%'], [1353, 720, '4-7 Hari', '20.24%'], [1278, 679, '8-14 Hari', '14.35%']] },
];

const QuadPair = ({ pair, at, y, h, top, bottom, mid }: { pair: Quad[]; at: (x: number, y: number) => [number, number]; y: number; h: number; top: number; bottom: number; mid: number }) => (
  <Chart x={1571} y={y} w={319} h={h}>
    <path d={`M1571 ${pair[0].cy}H1890`} stroke="#ebebeb" />
    <rect x="1571.500" y={top} width="318" height={bottom - top} fill="none" stroke="#cfcfcf" />
    <path d={`M${mid} ${top}V${bottom}`} stroke="#cfcfcf" />
    {pair.map(q => (
      <g key={q.cx}>
        <Donut cx={q.cx} cy={q.cy} ri={22.300} slices={q.slices} />
        <Tags items={q.tags} at={at} dy={7.700} s={6.100} c={INK} />
      </g>
    ))}
  </Chart>
);

/* routes */

const ROUTE_A = 'KNO-CGK,CGK-KNO,YIA-BPN,LOP-CGK,CGK-BDJ,CGK-LOP,BPN-SUB,SUB-BPN,BTJ-CGK,CGK-PLM,CGK-BTJ,CGK-YIA,CGK-SOQ,CGK-PNK,BDJ-CGK,BPN-YIA,SOQ-CGK,PNK-CGK,PLM-CGK,YIA-CGK,CGK-PKU,PKU-CGK,CGK-PDG,CGK-BPN,PDG-CGK,CGK-KDI,KDI-CGK,BPN-CGK,CGK-SUB,SUB-CGK,CGK-DPS,DPS-CGK'.split(',');
const ROUTE_AV = [2, 2, 5, 5, 6, 6, 6, 7, 7, 7, 7, 7, 9, 9, 10, 12, 14, 14, 15, 16, 18, 23, 25, 25, 33, 37, 37, 40, 41, 45, 81, 97];
const ROUTE_D = 'CGK-LOP,LOP-CGK,KNO-CGK,CGK-KNO,KDI-CGK,BPN-YIA,CGK-KDI,YIA-BPN,BPN-SUB,CGK-BDJ,SUB-BPN,PLM-CGK,CGK-PLM,BDJ-CGK,YIA-CGK,CGK-BTJ,CGK-PNK,BTJ-CGK,CGK-YIA,PNK-CGK,SOQ-CGK,CGK-SOQ,PKU-CGK,CGK-PKU,PDG-CGK,CGK-PDG,CGK-BPN,BPN-CGK,DPS-CGK,CGK-DPS,CGK-SUB,SUB-CGK'.split(',');
const ROUTE_DV = [3, 4, 4, 4, 5, 6, 6, 7, 7, 9, 9, 10, 10, 10, 10, 10, 11, 11, 12, 12, 18, 20, 31, 33, 35, 35, 40, 43, 88, 88, 97, 99];

const ramp = (t: number) => {
  const stops: [number, number[]][] = [[0, [240, 243, 246]], [0.1, [221, 228, 234]], [0.25, [170, 191, 206]], [0.42, [118, 154, 180]], [0.8, [33, 77, 106]], [1, [12, 53, 80]]];
  let i = 1;
  while (i < stops.length - 1 && stops[i][0] < t) i++;
  const [a, ca] = stops[i - 1];
  const [b, cb] = stops[i];
  const k = (t - a) / (b - a);
  return `rgb(${ca.map((v, j) => Math.round(v + (cb[j] - v) * k)).join(',')})`;
};
const Routes = ({ x, w, base, first, step, names, values, grid }: { x: number; w: number; base: number; first: number; step: number; names: string[]; values: number[]; grid: number[] }) => (
  <Chart x={x} y={1451} w={w} h={139}>
    {grid.map(g => <path key={g} d={`M${x} ${g}h${w}`} stroke="#ebebeb" />)}
    {names.map((n, i) => (
      <g key={n}>
        <rect x={first + step * i - 3.700} y={base - values[i]} width="7.400" height={values[i]} fill={ramp(values[i] / 99)} />
        <Label x={first + step * i} y={base + 3.500} t={n} a="end" s={6.600} c="#4f738d" b={500} w={28} up />
      </g>
    ))}
  </Chart>
);

/* payments */

const PayTable = styled.div<{ $cols: string; $mt: number }>`
  display: grid;
  grid-template-columns: ${p => p.$cols};
  margin-top: ${p => p.$mt}px;
  font-size: 7.400px;
  color: #444;
`;
const PayHead = styled.div<{ $left?: boolean }>`
  height: 23px;
  line-height: 10.500px;
  display: flex;
  align-items: center;
  justify-content: ${p => (p.$left ? 'flex-start' : 'flex-end')};
  text-align: ${p => (p.$left ? 'left' : 'right')};
  padding-left: ${p => (p.$left ? 4 : 0)}px;
  border-bottom: 1px solid #d0d0d0;
`;
const PayCell = styled.div<{ $left?: boolean; $alt?: boolean; $bold?: boolean }>`
  height: 12px;
  line-height: 12px;
  white-space: nowrap;
  text-align: ${p => (p.$left ? 'left' : 'right')};
  padding-left: ${p => (p.$left ? 4 : 0)}px;
  font-weight: ${p => (p.$bold ? 600 : 400)};
  letter-spacing: ${p => (p.$left ? '-0.1px' : '-0.250px')};
  background: ${p => (p.$alt ? '#ececec' : 'transparent')};
`;
const PayGrid = ({ rows, cols, mt, bold, first }: { rows: string[][]; cols: string; mt: number; bold?: boolean; first: React.ReactNode }) => (
  <PayTable $cols={cols} $mt={mt}>
    <PayHead $left>{first}</PayHead>
    <PayHead>Count of<br />Payment</PayHead>
    <PayHead>Sales<br />Amount</PayHead>
    <PayHead>Average<br />Fare</PayHead>
    {rows.map((r, i) => r.map((v, j) => <PayCell key={`${i}${j}`} $left={!j} $bold={bold && !j} $alt={i % 2 === 1}>{v}</PayCell>))}
  </PayTable>
);

const PelitaLogo = () => (
  <svg width="142" height="34" viewBox="0 0 142 34">
    <path d="M0 1h17q7 1 7 10Q14 9 8 8Q3 6 0 1z" fill="#d91f3a" />
    <path d="M5 9q12 4 20 5v5q-9-1-14-3q-4-3-6-7z" fill="#a3aa1c" />
    <path d="M12 17.500q8 2 13 3q-.5 4-5 2.500q-5-1-8-5.500z" fill="#a3aa1c" />
    <path d="M19 18.500l6-1q0 4-5 6.500q0-3-1-5.500z" fill="#1764b0" />
    <text x="30.500" y="18.700" fontFamily="Lato, sans-serif" fontSize="17" fontWeight="700" fill="#17375e" textLength="107" lengthAdjust="spacingAndGlyphs">PELITA AIR</text>
    <text x="30.500" y="29" fontFamily="Open Sans, sans-serif" fontSize="6.200" fill="#17375e" textLength="72" lengthAdjust="spacingAndGlyphs"><tspan fontStyle="italic">A member of </tspan><tspan fontWeight="700">PERTAMINA</tspan></text>
  </svg>
);

const FilterBox = ({ w, mr, mt, label, value }: { w: number; mr: number; mt: number; label: string; value: string }) => (
  <Filter $w={w} $mr={mr} $mt={mt}>{label}<Select><span>{value}</span><i /></Select></Filter>
);

function Dashboard() {
  const c10 = project(1070, 1170, 1.8667, 3);
  const c9 = project(1560, 920, 3, 3);
  return (
    <Sheet>
      <Head>
        <Logo><PelitaLogo /></Logo>
        <Title>DIRECT SALES DASHBOARD</Title>
      </Head>
      <Filters>
        <DateRange>
          Transaction Date
          <Dates><span>4/26/2022</span><span>4/9/2025</span></Dates>
          <svg width="100" height="10" viewBox="0 0 100 10" fill="#fff" stroke="#555">
            <path d="M5 5H92" stroke="#c4c4c4" strokeWidth="2" />
            <path d="M7.500 1v8h-2q-3-4 0-8zM90.500 1v8h2q3-4 0-8z" />
          </svg>
        </DateRange>
        <FilterBox w={73} mr={5.500} mt={1} label="Year" value="(All)" />
        <FilterBox w={84.500} mr={205} mt={0} label="Month" value="(All)" />
        <FilterBox w={86.500} mr={9.500} mt={0} label="Agent Name Booking" value="(All)" />
        <FilterBox w={63} mr={8} mt={-1} label="Route" value="(Multiple val..." />
        <FilterBox w={55} mr={7.500} mt={-1} label="Sub Class" value="(Multiple v..." />
        <FilterBox w={78.500} mr={0} mt={-1} label="Transaction" value="ISSUED" />
      </Filters>

      <Row $mt={0} $pl={22} $h={128}>
        <Panel $w={224} $h={130} $mr={8}>
          <Band $w={223}>Grand Total Sales</Band>
          <Kpi $h={25} $ml={1}>Rp 286,554,780,114</Kpi>
          <Band $w={222}>Total Sales Airport</Band>
          <Kpi $h={19} $ml={1}>Rp 117,130,092,358</Kpi>
          <Band $w={223} $mt={2}>Total Sales Digital</Band>
          <Kpi $h={18} $ml={2}>Rp 169,424,687,756</Kpi>
        </Panel>
        <Contribution />
      </Row>

      <Row $mt={6} $pl={22} $h={166}>
        <Panel $w={393} $h={165} $mt={1} $mr={11}>
          <Band $w={393}>Annual Sales Airport Channel</Band>
          <Chart x={0} y={0} w={393} h={147}>
            <path d="M0 50.500H392" stroke="#ededed" />
            <path d="M0 104.500H392" stroke="#ececec" strokeDasharray="3 2" />
            <path d="M.5 147V2.500H392.500V110.500H0" fill="none" stroke="#cccccc" />
            <Lines data={ANNUAL_AIRPORT} x0={16.600} step={32.680} />
            {MONTHS.map((m, i) => <Label key={m} x={16.600 + i * 32.680} y={113.500} t={SHORT[m] ?? m} s={7.400} c="#777" b={400} a="end" w={LONG_W[i]} up />)}
          </Chart>
        </Panel>
        <Panel $w={391} $h={166} $outline>
          <Band $w={387}>Annual Sales Digital Channel</Band>
          <Chart x={0} y={0} w={389} h={146}>
            <path d="M0 29.500H387M0 65.500H387" stroke="#ededed" />
            <path d="M.5 144V1.500H386.500V144M0 108.500H387" fill="none" stroke="#cccccc" />
            <Lines data={ANNUAL_DIGITAL} x0={16} step={32.190} />
            {MONTHS.map((m, i) => <Label key={m} x={16 + i * 32.190} y={111} t={m} s={6} c="#2230a0" b={600} a="end" w={SMALL_W[i]} up />)}
          </Chart>
        </Panel>
      </Row>

      <Row $mt={9} $pl={22} $h={174}>
        <Panel $w={393} $h={172} $mt={2} $mr={11} $outline>
          <Band $w={389}>Monthly Sales Airport Channel</Band>
          <HBars names={MONTHS} values={[11660, 14037, 11096, 6200, 6490, 5210, 7775, 10059, 10981, 12957, 11276, 9397]} x={1140} y0={657} step={12.550} h={10} unit={286.6 / 14037} ink="#4a4a4a" box={[1093, 650, 391, 152]} grid={[1262.5, 1344.5, 1385.5, 1426.5, 1467.5]} />
        </Panel>
        <Panel $w={391} $h={174} $outline>
          <Band $w={388}>Monthly Sales Digital Channel</Band>
          <HBars names={MONTHS} values={[19326, 17749, 16118, 9262, 9638, 11582, 13474, 13229, 12918, 14128, 16733, 15268]} x={1546} y0={656} step={12.600} h={10} unit={283.4 / 19326} ink="#4a4a4a" box={[1497, 648, 389, 154]} grid={[1634.5, 1693.5, 1722.5, 1751.5, 1781.5, 1810.5, 1840.5, 1869.5]} />
        </Panel>
      </Row>

      <Row $mt={10} $pl={22} $h={107}>
        <Panel $w={393} $h={107} $mr={11} $outline>
          <Band $w={389}>Daily Sales Airport Channel</Band>
          <HBars names={DAYS} values={[7082, 17838, 20930, 19986, 19289, 22358, 9656]} x={1141} y0={840.5} step={12} h={9} unit={285.5 / 22358} ink="#4a4a4a" box={[1093, 832, 391, 87]} grid={[]} />
        </Panel>
        <Panel $w={393} $h={107} $outline>
          <Band $w={390}>Daily Sales Digital Channel</Band>
          <HBars names={DAYS} values={[16514, 26126, 28214, 27515, 25547, 27104, 18404]} x={1545} y0={840.5} step={12} h={9} unit={286.6 / 28214} ink="#000" box={[1497, 832, 391, 87]} grid={[]} />
        </Panel>
      </Row>

      <Row $mt={9} $pl={22} $h={237}>
        <Panel $w={265} $h={236} $mt={1} $mr={3} $outline>
          <Band $w={261}>Monthly Growth Airport Channel</Band>
          <Waterfall data={FALL_AIRPORT} oy={920} x0={1093} top={949} h={216} grid={[166, 256, 439, 532, 621]} zero={349} axis={1153} />
        </Panel>
        <Panel $w={208} $h={236} $mt={1} $mr={3} $outline>
          <Band $w={203}>Monthly Growth Airport Channel</Band>
          <Pivot $first={38} $col={30.6} $top={18} $sub={11.7} $row={13.140}>
            <Corner />
            <Region $span={3}>BDJ</Region>
            <Region $span={3}>BPN</Region>
            {['2023', '2024', '2025', '2023', '2024', '2025'].map((y, i) => <Year key={i}>{y}</Year>)}
            {cells(PIVOT_AIRPORT, 3, 3)}
          </Pivot>
        </Panel>
        <Panel $w={319} $h={238}>
          <BandRow><Band $w={153}>Flown Day Airport</Band><Band $w={166}>Transaction Day Airport</Band></BandRow>
          <QuadPair pair={QUAD_AIRPORT.slice(0, 2)} at={c9} y={947} h={105} top={949.5} bottom={1051} mid={1724.5} />
          <BandRow $gap={1}><Band $w={153}>Transaction Time Airport</Band><Band $w={165}>Booking Pattern Airport</Band></BandRow>
          <QuadPair pair={QUAD_AIRPORT.slice(2)} at={c9} y={1070} h={97} top={1072.5} bottom={1165.5} mid={1725} />
        </Panel>
      </Row>

      <Row $mt={13} $pl={21} $h={244}>
        <Panel $w={267} $h={244} $mr={3} $outline>
          <Band $w={263}>Monthly Growth Digital Channel</Band>
          <Waterfall data={FALL_DIGITAL} oy={1170} x0={1092} top={1198} h={224} grid={[328, 406, 484, 643]} zero={169} axis={1409} />
        </Panel>
        <Panel $w={207} $h={243} $mt={1} $mr={3} $outline>
          <Band $w={204}>Monthly Growth Digital Channel</Band>
          <Pivot $first={37} $col={32.300} $top={16} $sub={12.400} $row={13.150}>
            <Corner />
            <Region $span={4}>Contact Center</Region>
            <Region $span={2} />
            {['2022', '2023', '2024', '2025', '2022', '2023'].map((y, i) => <Year key={i}>{y}</Year>)}
            {cells(PIVOT_DIGITAL, 4, 1)}
          </Pivot>
        </Panel>
        <Panel $w={320} $h={243} $mt={1}>
          <BandRow><Band $w={154}>Flown Day Digital</Band><Band $w={165}>Transaction Day Digital</Band></BandRow>
          <QuadPair pair={QUAD_DIGITAL.slice(0, 2)} at={c10} y={1198} h={107} top={1199.5} bottom={1304.5} mid={1723.5} />
          <BandRow><Band $w={154}>Transaction Time Digital</Band><Band $w={165}>Booking Pattern Digital</Band></BandRow>
          <QuadPair pair={QUAD_DIGITAL.slice(2)} at={c10} y={1323} h={100} top={1325.5} bottom={1422} mid={1723.5} />
        </Panel>
      </Row>

      <Row $mt={10} $pl={21} $h={157}>
        <Panel $w={391} $h={157} $mr={13}>
          <Band $w={391}>Route Contribution Airport</Band>
          <Routes x={1091} w={391} base={1555} first={1096.8} step={12.220} names={ROUTE_A} values={ROUTE_AV} grid={[1468.5, 1497.5]} />
        </Panel>
        <Panel $w={395} $h={157}>
          <Band $w={395}>Route Contribution Digital</Band>
          <Routes x={1495} w={395} base={1557} first={1500.7} step={12.370} names={ROUTE_D} values={ROUTE_DV} grid={[1463.5, 1510.5]} />
        </Panel>
      </Row>

      <Row $mt={8} $pl={21} $h={82}>
        <Panel $w={150} $h={80} $mt={2} $mr={2}>
          <Band $w={150}>Payment Channel Airport</Band>
          <Chart x={1091} y={1618} w={150} h={62}>
            <Label x={1095} y={1628} t="(group) Payment C.." a="start" s={7} c="#222" b={500} w={58} />
            <path d="M1156 1624.500h6M1156 1626.500h4M1156 1628.500h2" stroke="#555" />
            <path d="M1175.500 1632V1680M1195.500 1644V1680M1238.500 1632V1680" stroke="#d8d8d8" />
            <rect x="1175.500" y="1634" width="30.500" height="10" fill={NAVY} />
            <rect x="1175.500" y="1648" width="6" height="9.500" fill={NAVY} />
            <rect x="1175.500" y="1661" width="3" height="9.500" fill={NAVY} />
            <rect x="1175.500" y="1675" width="2.500" height="5" fill={NAVY} />
            <Label x={1171} y={1639.500} t="Transfer" a="end" s={7.200} c="#555" b={400} />
            <Label x={1171} y={1652.700} t="Debit Card" a="end" s={7.200} c="#555" b={400} />
            <Label x={1171} y={1666} t="QRIS" a="end" s={7.200} c="#555" b={400} />
            <Label x={1171} y={1679.500} t="Cash" a="end" s={7.200} c="#555" b={400} />
            <Label x={1191.600} y={1639.500} t="76,780,867,647" a="start" s={7} c="#000" b={600} w={47} />
            <Label x={1184.600} y={1652.700} t="15,869,581,546" a="start" s={7} c="#000" b={600} w={47} />
            <Label x={1181} y={1666} t="9,357,377,776" a="start" s={7} c="#000" b={600} w={43} />
            <Label x={1180.500} y={1679.500} t="9,027,390,618" a="start" s={7} c="#000" b={600} w={43} />
          </Chart>
        </Panel>
        <Panel $w={252} $h={80} $mt={2}>
          <Band $w={232}>Payment Channel Airport</Band>
          <PayGrid
            cols="86px 44px 47px 46px"
            mt={2}
            first="Payment Channel"
            rows={[['Transfer', '36,412', '44,634.96M', '998,106'], ['Transfer,Transfer', '16,784', '22,816.34M', '1,119,251'], ['Debit card', '11,436', '15,820.35M', '1,138,054']]}
          />
        </Panel>
        <Panel $w={194} $h={81} $mt={1} $mr={2}>
          <Band $w={194}>Payment Channel Digital</Band>
          <Chart x={1495} y={1617} w={194} h={63}>
            <Label x={1495.500} y={1627} t="(group).." a="start" s={7} c="#222" b={500} />
            <path d="M1524 1623.500h6M1524 1625.500h4M1524 1627.500h2" stroke="#555" />
            <path d="M1542.500 1630V1680M1612.500 1646V1680M1666.500 1630V1680" stroke="#d8d8d8" />
            <rect x="1543" y="1633.300" width="82.500" height="11" fill={NAVY} />
            <rect x="1543" y="1650" width="52.500" height="11" fill={NAVY} />
            <rect x="1543" y="1666.500" width="1.200" height="11" fill={NAVY} />
            <Label x={1540.500} y={1639.500} t="VA" a="end" s={7.200} c="#555" b={400} />
            <Label x={1540.500} y={1656} t="Credit Card" a="end" s={7.200} c="#555" b={400} />
            <Label x={1540.500} y={1672} t="FIM" a="end" s={7.200} c="#555" b={400} />
            <Label x={1628} y={1639} t="108,210,240,099" a="start" s={7} c="#000" b={600} w={52} />
            <Label x={1598} y={1655.500} t="65,688,106,976" a="start" s={7} c="#000" b={600} w={47} />
            <Label x={1546} y={1672} t="58,228,539" a="start" s={7} c="#000" b={600} w={34.500} />
          </Chart>
        </Panel>
        <Panel $w={193} $h={82}>
          <Band $w={193}>Payment Channel Digital</Band>
          <PayGrid
            cols="49px 44px 45px 46px"
            mt={2}
            bold
            first={<span>Payment<br />Channel</span>}
            rows={[['Credit Card', '51,681', '65,688.19M', '1,054,881'], ['BCA VA', '32,869', '40,051.31M', '1,002,984'], ['MANDIRI VA', '27,898', '34,638.12M', '1,036,625'], ['', '', '', '']]}
          />
        </Panel>
      </Row>
    </Sheet>
  );
}

/* ---------- dock ---------- */

const DockArea = styled.div`
  height: 108px;
  margin-top: 2px;
  flex: none;
  display: flex;
  justify-content: center;
  padding-right: 3px;
`;
const Dock = styled.div`
  width: 2250px;
  height: 108px;
  padding: 0 5px 0 3px;
  display: flex;
  border-radius: 32px;
  border: 2px solid rgba(200, 205, 245, 0.45);
  background: linear-gradient(90deg, #5d5aa8 0, #5860b4 380px, #5560c2 850px, #8078ac 960px, #b08a9c 1030px, #a789ae 1180px, #a68bb8 1350px, #b3849c 1480px, #a5839f 1620px, #9583ae 1780px, #8a84b4 1950px, #7f88c0 2120px, #6e90d0 2249px);
`;
const DockSlot = styled.div`
  width: 90px;
  height: 104px;
  flex: none;
  display: flex;
  justify-content: center;
  padding-top: 14px;
  position: relative;
`;
const Tile = styled.div<{ $bg: string }>`
  width: 68px;
  height: 70px;
  border-radius: 16px;
  background: ${p => p.$bg};
  display: grid;
  place-items: center;
  overflow: hidden;
  box-shadow: 0 1px 3px rgba(0, 0, 0, 0.3);
`;
const Loose = styled.div<{ $lift: number }>`
  margin-top: ${p => -p.$lift}px;
`;
const RunDot = styled.i`
  position: absolute;
  left: 39px;
  bottom: 2px;
  width: 8px;
  height: 8px;
  border-radius: 50%;
  background: #180c45;
`;
const Badge = styled.span<{ $w: number }>`
  position: absolute;
  top: 5px;
  right: ${p => (p.$w > 40 ? 1 : 0)}px;
  width: ${p => p.$w}px;
  height: 34px;
  border-radius: 17px;
  background: #f8423c;
  color: #fff;
  font-size: 20px;
  display: grid;
  place-items: center;
`;
const DockRule = styled.div`
  width: 40px;
  height: 104px;
  flex: none;
  padding: 12px 0 0 20px;
  i { display: block; width: 1px; height: 80px; background: rgba(40, 30, 70, 0.6); }
`;
const Canva = styled.span`
  color: #fff;
  font: italic 700 22px "Liberation Serif", serif;
`;

type Item = { bg?: string; art: React.ReactNode; run?: boolean; badge?: string; lift?: number };
const office = (dark: string, parts: React.ReactNode, letter: string) => (
  <svg width="68" height="70" viewBox="0 0 68 70">
    {parts}
    <rect x="7" y="23" width="26" height="25" rx="2" fill={dark} />
    <text x="20" y="42" textAnchor="middle" fontFamily="Open Sans, sans-serif" fontSize="18" fontWeight="700" fill="#fff">{letter}</text>
  </svg>
);

const GearTeeth = () => (
  <>{Array.from({ length: 36 }, (_, i) => <path key={i} d="M35 5v5" stroke="#2a2a2c" strokeWidth="2.600" transform={`rotate(${i * 10} 35 35)`} />)}</>
);

const APPS_LEFT: Item[] = [
  { run: true, bg: 'linear-gradient(90deg,#1fb4f8 0,#2094f5 52%,#e6eaf0 52%)', art: <svg width="68" height="70" viewBox="0 0 68 70" fill="none" stroke="#15223c" strokeWidth="3" strokeLinecap="round"><path d="M35 4q-8 16-7 35h8q0 14 2 27" stroke="#1c4f92" strokeWidth="1.500" /><path d="M18 22v6M50 22v6M14 49q20 12 40 0" /></svg> },
  { bg: 'linear-gradient(#7c85f7,#5460ee)', art: <FaDiscord size={46} color="#fff" /> },
  { bg: '#c8cae8', art: <svg width="56" height="52" viewBox="0 0 56 52">{['#4fc94a', '#f5bb1b', '#f2902a', '#ea3f38', '#8c929c', '#f04f63', '#a24bd2', '#3a88f0', '#2fc9a8'].map((c, i) => <rect key={c} x={5 + (i % 3) * 17} y={3 + Math.floor(i / 3) * 17} width="13" height="13" rx="3" fill={c} />)}</svg> },
  { run: true, badge: '9.364', bg: 'linear-gradient(#1f78ee,#1fc2fb)', art: <svg width="52" height="38" viewBox="0 0 52 38"><rect width="52" height="36" rx="4" y="1" fill="#eef0f2" /><path d="M2 3l24 20L50 3M2 35l18-17M50 35L32 18" fill="none" stroke="#b5bac2" strokeWidth="1.600" /></svg> },
  { run: true, bg: '#e9ebee', art: <svg width="62" height="62" viewBox="0 0 62 62"><circle cx="31" cy="31" r="30" fill="#2b93ee" /><circle cx="31" cy="31" r="26.500" fill="none" stroke="#cfe8ff" strokeWidth="4" strokeDasharray="1 2.500" /><path d="M51 11L34 34l-6-6z" fill="#f2453d" /><path d="M11 51l17-23 6 6z" fill="#f3f5f7" /></svg> },
  { run: true, bg: '#fff', art: <svg width="60" height="60" viewBox="0 0 60 60"><path d="M30 30L4 15A30 30 0 0 1 56 15z" fill="#e33b2e" /><path d="M30 30L4 15a30 30 0 0 0 26 45l13-22z" fill="#2f9e4f" /><path d="M30 60A30 30 0 0 0 56 15H30l13 22.500z" fill="#fbc116" /><circle cx="30" cy="30" r="14" fill="#fff" /><circle cx="30" cy="30" r="11" fill="#3b7ded" /></svg> },
  { run: true, bg: 'linear-gradient(#f5f5f7,#d9d9df)', art: (
    <svg width="62" height="62" viewBox="0 0 62 62">
      <defs>
        <linearGradient id="ff" gradientUnits="userSpaceOnUse" x1="420" y1="30" x2="120" y2="480"><stop offset="0" stopColor="#fff04a" /><stop offset=".45" stopColor="#ff9a1f" /><stop offset="1" stopColor="#f5284f" /></linearGradient>
      </defs>
      <circle cx="31" cy="33" r="22" fill="#6d2fd0" />
      <FaFirefoxBrowser size={62} fill="url(#ff)" />
    </svg>
  ) },
  { run: true, bg: '#fff', art: office('#c43e1c', <><circle cx="38" cy="35" r="23" fill="#ed6c47" /><path d="M38 12a23 23 0 0 1 23 23H38z" fill="#ff8f6b" /><path d="M15 35a23 23 0 0 0 46 0z" fill="#d35230" /></>, 'P') },
  { run: true, bg: '#fff', art: office('#107c41', <><rect x="18" y="12" width="42" height="46" rx="3" fill="#21a366" /><rect x="39" y="12" width="21" height="15" fill="#33c481" /><path d="M18 42h42v13a3 3 0 0 1-3 3H21a3 3 0 0 1-3-3z" fill="#185c37" /><rect x="39" y="27" width="21" height="15" fill="#107c41" /></>, 'X') },
  { bg: '#fff', art: office('#185abd', <><rect x="18" y="12" width="42" height="46" rx="3" fill="#2b7cd3" /><path d="M18 24V15a3 3 0 0 1 3-3h36a3 3 0 0 1 3 3v9z" fill="#41a5ee" /><path d="M18 46h42v9a3 3 0 0 1-3 3H21a3 3 0 0 1-3-3z" fill="#103f91" /><rect x="18" y="35" width="42" height="11" fill="#185abd" /></>, 'W') },
  { bg: '#fff', art: <svg width="52" height="52" viewBox="0 0 100 100"><path d="M96 10.800L75.400.9a6.200 6.200 0 0 0-7 1.200L29 38.100 11.900 25.100a4.200 4.200 0 0 0-5.300.2L1.100 30.300a4.200 4.200 0 0 0 0 6.200L15.900 50 1.100 63.500a4.200 4.200 0 0 0 0 6.200l5.500 5a4.200 4.200 0 0 0 5.300.2L29 61.900l39.400 36a6.200 6.200 0 0 0 7 1.200L96 89.200a6.300 6.300 0 0 0 3.500-5.600V16.400A6.300 6.300 0 0 0 96 10.800zM75 72.700L45.100 50 75 27.300z" fill="#1070bd" /><path d="M75 1v98l21-9.800a6.300 6.300 0 0 0 3.500-5.600V16.400a6.300 6.300 0 0 0-3.500-5.600z" fill="#2196ea" /></svg> },
  { bg: 'linear-gradient(#fff,#e3ebf2)', art: <RiOpenaiFill size={56} color="#20252b" /> },
  { lift: 2, art: <svg width="72" height="74" viewBox="0 0 72 74"><rect width="72" height="74" fill="#f2f4f6" /><g transform="translate(4 5)"><Tableau size={64} mono /></g></svg> },
  { run: true, bg: 'linear-gradient(160deg,#10c0cf 0,#20a0dc 45%,#6a3fe8 95%)', art: <Canva>Canva</Canva> },
  { run: true, bg: 'linear-gradient(#ffd75a 0,#fdc41a 25%,#fff 26%,#efefe9 40%,#e7e7e0)', art: <svg width="68" height="70" viewBox="0 0 68 70"><path d="M0 21h68" stroke="#9a8f70" strokeDasharray="1.500 2" /><path d="M0 34.500h68M0 52.500h68" stroke="#cfcfc6" /></svg> },
  { bg: 'linear-gradient(#ff9d0a,#ff6a12)', art: <svg width="50" height="42" viewBox="0 0 50 42" fill="#fff"><path d="M24 5Q13-2 3 4a2 2 0 0 0-1 2v30q0 2 2 1 10-4 19 2 1 1 1-1zM26 5Q37-2 47 4a2 2 0 0 1 1 2v30q0 2-2 1-10-4-19 2-1 1-1-1z" /></svg> },
  { run: true, lift: 0, art: <svg width="70" height="70" viewBox="0 0 70 70"><circle cx="35" cy="35" r="32" fill="#101010" /><FaSpotify size={70} color="#1ed760" /></svg> },
  { run: true, badge: '55', bg: 'linear-gradient(#5ef777,#0cc143)', art: <FaWhatsapp size={56} color="#fff" /> },
  { badge: '1', bg: 'linear-gradient(#d3dde6,#83837f)', art: <svg width="68" height="68" viewBox="0 0 70 70" fill="none"><circle cx="35" cy="35" r="28" fill="#59595c" /><GearTeeth /><circle cx="35" cy="35" r="24.500" stroke="#232325" strokeWidth="3" /><circle cx="35" cy="35" r="19" fill="#98989c" stroke="#232325" strokeWidth="3" /><path d="M35 35h19M35 35L25.500 18.500M35 35l-9.500 16.500" stroke="#232325" strokeWidth="4" /><circle cx="35" cy="35" r="5" fill="#98989c" stroke="#232325" strokeWidth="2.500" /></svg> },
];
const APPS_RIGHT: Item[] = [
  { run: true, bg: '#fff', art: <svg width="60" height="56" viewBox="0 0 60 56"><path d="M17 3q7 3 9 0h14v12q-4 8-7 14l-10-4q-6-10-6-22z" fill="#00d6a8" /><path d="M3 15q8-2 12 5 6 12 24 12 1 3-2 8-7 9-18 7Q3 44 3 28z" fill="#2d6df6" /><path d="M57 18q-17-5-23 13-3 8-9 14 14 2 22-8 6-8 10-19z" fill="#173a9c" /></svg> },
  { run: true, bg: 'linear-gradient(#fb5c74,#fa233b)', art: <svg width="44" height="50" viewBox="0 0 44 50"><path d="M14 6l24-5v33a7 6 0 1 1-4-6V13L18 16v24a7 6 0 1 1-4-6z" fill="#fff" /></svg> },
  { run: true, bg: 'linear-gradient(#6cf45a,#1ecb24)', art: <svg width="50" height="50" viewBox="0 0 50 50" fill="#fff"><rect x="1" y="38" width="8" height="11" rx="1" /><rect x="11" y="28" width="8" height="21" rx="1" /><rect x="21" y="10" width="8" height="39" rx="1" /><rect x="31" y="1" width="8" height="48" rx="1" /><rect x="41" y="19" width="8" height="30" rx="1" /></svg> },
];
const APPS_END: Item[] = [
  { lift: 4, art: <svg width="60" height="78" viewBox="0 0 60 78"><path d="M1 1h38l20 22v54H1z" fill="#f5f5f6" stroke="#ccc" /><path d="M39 1v22h20z" fill="#dcdce0" /><rect x="13" y="23" width="34" height="16" fill="#9cc4ea" /><path d="M13 39q16-12 34-4v21H13z" fill="#3f5f7f" /><path d="M20 46l12-5 10 7-14 6z" fill="#d9dde2" /><text x="30" y="71" textAnchor="middle" fontFamily="Inter, sans-serif" fontSize="11.500" fill="#777">PNG</text></svg> },
  { lift: 7, art: (
    <svg width="62" height="82" viewBox="0 0 62 82">
      <defs><linearGradient id="bin"><stop offset="0" stopColor="#cfd1d3" /><stop offset=".3" stopColor="#eceded" /><stop offset=".7" stopColor="#dcdedf" /><stop offset="1" stopColor="#bfc2c5" /></linearGradient></defs>
      <path d="M3 14l7 60q21 9 42 0l7-60z" fill="url(#bin)" />
      <path d="M14 24l5 50M27 26l1 52M42 25l-3 52M53 22l-7 52" stroke="#c6c9cb" strokeWidth="1.500" fill="none" />
      <path d="M6 15l3-8 8-4 6 3 6-5 9 4 8-2 5 6 5 4-2 8-10 4H17z" fill="#f1f1ef" />
      <path d="M12 8l6 7M24 6l-3 9M33 5l6 6M47 8l-5 9M28 14l8 3" stroke="#8a8580" strokeWidth="2" />
      <path d="M40 10l5 4M14 17l5-2" stroke="#4a3a34" strokeWidth="3" />
      <path d="M2 14q29 16 58 0" fill="none" stroke="#f2f3f4" strokeWidth="2.500" />
    </svg>
  ) },
];
const DockApps = ({ list }: { list: Item[] }) => (
  <>
    {list.map((a, i) => (
      <DockSlot key={i}>
        {a.bg ? <Tile $bg={a.bg}>{a.art}</Tile> : <Loose $lift={a.lift ?? 0}>{a.art}</Loose>}
        {a.badge && <Badge $w={a.badge.length > 2 ? 56 : 34}>{a.badge}</Badge>}
        {a.run && <RunDot />}
      </DockSlot>
    ))}
  </>
);

/* ---------- menu bar icons ---------- */

const stroke = { fill: 'none', stroke: '#fff', strokeWidth: 2.4, strokeLinecap: 'round', strokeLinejoin: 'round' } as const;

function TopMenu() {
  return (
    <MenuBar>
      <Slot $w={108} $pad={39}><FaApple size={31} /></Slot>
      <MenuItem $w={131} $bold>Firefox</MenuItem>
      <MenuItem $w={84}>File</MenuItem>
      <MenuItem $w={87}>Edit</MenuItem>
      <MenuItem $w={101}>View</MenuItem>
      <MenuItem $w={128}>History</MenuItem>
      <MenuItem $w={176}>Bookmarks</MenuItem>
      <MenuItem $w={106}>Tools</MenuItem>
      <MenuItem $w={138}>Window</MenuItem>
      <MenuItem $w={100}>Help</MenuItem>
      <Push />
      <Slot $w={45}>
        <svg width="36" height="30" viewBox="0 0 36 30" fill="#fff"><path d="M8 0h12q5 3 5 10l-6 6Q15 4 8 0z" /><path d="M0 10q5 1 9 6 5 6 11 2 4-3 5-7 3-3 10-1-4 3-5 9-3 10-14 10Q1 28 0 10z" /></svg>
      </Slot>
      <Slot $w={75}>36</Slot>
      <Slot $w={72}><svg width="32" height="32" viewBox="0 0 32 32" {...stroke}><rect x="1.500" y="1.500" width="29" height="29" rx="7" /><circle cx="10" cy="9" r="2.500" fill="#fff" /></svg></Slot>
      <Slot $w={74}><svg width="32" height="32" viewBox="0 0 32 32" {...stroke}><path d="M16 1.500l13 9-13 9-13-9zM3 21.500l5-3.500M29 21.500l-5-3.500M3 21.500l13 9 13-9" /></svg></Slot>
      <Slot $w={70}><svg width="28" height="28" viewBox="0 0 28 28" fill="#fff"><path d="M10 0Q3 4 2 12q0 15 16 16 6-1 10-6-16 2-18-10-1-7 0-12z" /></svg></Slot>
      <Slot $w={64}><svg width="29" height="29" viewBox="0 0 29 29" {...stroke}><circle cx="14.500" cy="14.500" r="13" /><path d="M11.500 9.500v10l8-5z" fill="#fff" /></svg></Slot>
      <Percent $w={56}>23%</Percent>
      <Slot $w={88}><svg width="52" height="25" viewBox="0 0 52 25"><rect x="1" y="1.200" width="45" height="22.500" rx="6.500" fill="none" stroke="#fff" strokeOpacity=".6" strokeWidth="2" /><rect x="4" y="4" width="8.500" height="17" rx="2.500" fill="#fc0" /><path d="M48.500 8.500q4 4 0 8z" fill="#fff" opacity=".6" /></svg></Slot>
      <Slot $w={70}><FaBluetoothB size={28} /></Slot>
      <Slot $w={70}><svg width="35" height="27" viewBox="0 0 35 27" fill="none" stroke="#fff" strokeWidth="4.200"><path d="M2 9.500q15.500-14 31 0" /><path d="M8 15.800q9.500-8.500 19 0" /><path d="M17.500 25.500l-5-5.500q5-4 10 0z" fill="#fff" stroke="none" /></svg></Slot>
      <Slot $w={65}><Search size={28} strokeWidth={2.400} /></Slot>
      <Slot $w={65}><svg width="28" height="28" viewBox="0 0 28 28" fill="none" stroke="#fff" strokeWidth="2.200"><rect x="1.200" y="1.200" width="25.600" height="11" rx="5.500" /><circle cx="6.500" cy="6.700" r="3.500" fill="#fff" /><rect x="1.200" y="15.800" width="25.600" height="11" rx="5.500" fill="#fff" /><circle cx="21" cy="21.300" r="3.500" fill="#2f3a95" stroke="none" /></svg></Slot>
      <Clock $w={236}>Fri 18 Jul  09.23</Clock>
    </MenuBar>
  );
}

const gray = { fill: 'none', stroke: '#5b5b66', strokeWidth: 2.8, strokeLinecap: 'round', strokeLinejoin: 'round' } as const;

function BrowserBar() {
  return (
    <Toolbar>
      <Lights><Light $c="#ff5f57" $b="#e14640" /><Light $c="#febc2e" $b="#df9f20" /><Light $c="#28c840" $b="#1dab2e" /></Lights>
      <svg width="32" height="26" viewBox="0 0 32 26" fill="none" stroke="#5b5b66" strokeWidth="3"><rect x="1.500" y="1.500" width="29" height="23" rx="3" /><path d="M8.500 2v22" strokeWidth="4" /></svg>
      <NavButtons>
        <ArrowLeft size={36} strokeWidth={1.900} />
        <Forward><ArrowRight size={36} strokeWidth={1.900} /></Forward>
        <svg width="32" height="32" viewBox="0 0 32 32" fill="none" stroke="#5b5b66" strokeWidth="2.800" strokeLinecap="round"><path d="M28.500 17A12.700 12.700 0 1 1 24 6.800l3 2.800" /><path d="M29.500 2v9.500H20z" fill="#5b5b66" stroke="none" /></svg>
      </NavButtons>
      <UrlBar>
        <ToolIcon $w={64}><svg width="30" height="32" viewBox="0 0 30 32" {...gray} stroke="#505055"><path d="M15 1.500L28 6.500v8q0 10-13 16.500-13-6.500-13-16.500v-8z" /></svg></ToolIcon>
        <ToolIcon $w={48}><svg width="26" height="32" viewBox="0 0 26 32" {...gray} stroke="#505055"><rect x="2" y="14.500" width="22" height="16" rx="3.500" /><path d="M6.500 14V8q0-6.500 6.500-6.500T19.500 8v6" /></svg></ToolIcon>
        <UrlText>tabsv.<b>pelita-air.com</b>/#/views/Sales-Dashboard/GoogleSheetDashboard?:iid=2</UrlText>
        <ZoomPill>30%</ZoomPill>
        <StarIcon $w={48}><Star size={35} strokeWidth={1.900} /></StarIcon>
      </UrlBar>
      <Actions>
        <ToolIcon><svg width="30" height="31" viewBox="0 0 30 31" {...gray}><path d="M15 1.500v20M7 14l8 8 8-8M2 23.500v3q0 3 3 3h20q3 0 3-3v-3" /></svg></ToolIcon>
        <ToolIcon><svg width="32" height="32" viewBox="0 0 32 32" {...gray}><circle cx="16" cy="16" r="14.400" /><circle cx="16" cy="12.500" r="4.800" fill="#5b5b66" stroke="none" /><path d="M7 20.500h18q-2.500 6-9 6t-9-6z" fill="#5b5b66" stroke="none" /></svg></ToolIcon>
        <ToolIcon><svg width="29" height="33" viewBox="0 0 29 33" {...gray}><path d="M10 8V5q0-3.500 3.500-3.500T17 5v3h7q3 0 3 3v17q0 3-3 3H5q-3 0-3-3v-6h3.500q3 0 3-3t-3-3H2v-5q0-3 3-3z" /></svg></ToolIcon>
        <ToolIcon $w={78}>
          <svg width="33" height="25" viewBox="0 0 33 25" strokeLinejoin="round">
            <path d="M9 4q0-3 3-3l4 1 9 1q4-3 6 0v4l-1 3 2 6-2 6-8-1-6 3-8 0-7-2q-1-2 2-4z" fill="#fff" stroke="#f5761a" strokeWidth="1.800" />
            <path d="M10 3l4 1-1 4 4-2-3 8-8 6-4 0q0-2 3-4z" fill="#111" />
            <path d="M17 8l8-3 1 4-3 6-7 5 3-7z" fill="#222" />
            <path d="M22 17l6 1-3 4-7-1z" fill="#8a8a8a" />
          </svg>
        </ToolIcon>
        <ToolIcon><svg width="32" height="32" viewBox="0 0 32 32" {...gray}><rect x="1.600" y="9" width="28.800" height="21.500" rx="3.500" /><path d="M5 3.500q0-2 3-2h16q3 0 3 2M13.500 18h5" /></svg></ToolIcon>
        <ToolIcon $w={71}><svg width="30" height="30" viewBox="0 0 30 30" {...gray}><rect x="1.500" y="2" width="27" height="19" rx="3.500" /><path d="M1.500 25q1 3.500 4.500 3.500h18q3.500 0 4.500-3.500" /></svg></ToolIcon>
        <ToolIcon $w={72}><svg width="26" height="22" viewBox="0 0 26 22" {...gray}><path d="M2 2h22M2 11h22M2 20h22" /></svg></ToolIcon>
      </Actions>
    </Toolbar>
  );
}

const thin = { fill: 'none', stroke: 'currentColor', strokeWidth: 1 } as const;

export default function App() {
  return (
    <>
      <Global />
      <Desktop>
        <TopMenu />
        <Window>
          <BrowserBar />
          <Body>
            <Sidebar />
            <Main>
              <Crumbs>
                <Crumb $w={22}><ArrowLeft size={12} strokeWidth={1.600} /></Crumb>
                <Crumb $w={32} $link>Explore</Crumb><Crumb $w={8}>/</Crumb>
                <Crumb $w={44} $link>Dashboard</Crumb><Crumb $w={8}>/</Crumb>
                <Crumb $w={66} $link>Sales-Dashboard</Crumb><Crumb $w={10}>/</Crumb>
                <Crumb $w={91}>Google Sheet Dashboard</Crumb>
                <Star size={12} strokeWidth={1.600} />
                <Push />
                <svg width="9" height="11" viewBox="0 0 9 11" {...thin}><ellipse cx="4.500" cy="2" rx="3.500" ry="1.500" /><path d="M1 2v6q0 2 3.500 2M8 2v3M5 6h3.500v4H5z" /></svg>
                <Crumb $w={60} $pad={4}>Data Sources</Crumb>
                <Bar $c="#888" $h={12} />
                <Slot $w={26} $pad={11}><Search size={11} strokeWidth={1.600} /></Slot>
                <Slot $w={27} $pad={11}><svg width="10" height="10" viewBox="0 0 10 10" {...thin}><rect x=".5" y="1.500" width="6.500" height="8" /><path d="M2 4h3.500M2 6h3.500M8 0v3.500" /></svg></Slot>
                <Slot $w={27} $pad={10}><CircleHelp size={12} strokeWidth={1.600} /></Slot>
                <Slot $w={24} $pad={10}><Bell size={11} strokeWidth={1.800} /></Slot>
                <Avatar>E</Avatar>
              </Crumbs>
              <Ribbon>
                <Slot $w={147}>
                  <svg width="146" height="14" viewBox="0 0 146 14" fill="none" stroke="#53809c">
                    <path d="M6 2L4 4.500 6 7M4 4.500q7-1 7 3T6 12M32 2l2 2.500L32 7M34 4.500q-7-1-7 3T32 12M54 2l-2 2.500L54 7M52 4.500q7-1 7 3T54 12" />
                    <g stroke="#d5e2ea"><path d="M76 3q4-2 7 0v3M76 3v8h3M80 7h4v4h-4zM100 3q4-2 7 0v4M100 3v8h3M104 8h3v3h-3z" /></g>
                    <path d="M122 4h8v5h-10V6M128 2l2 2-2 2" /><path d="M140 5h5l-2.500 4z" fill="#53809c" stroke="none" />
                  </svg>
                </Slot>
                <Slot $w={26} $pad={9}><Bar $c="#6d96b0" $h={12} /></Slot>
                <svg width="9" height="11" viewBox="0 0 9 11" {...thin}><rect x=".5" y=".5" width="8" height="9.500" /><path d="M2.500 8V5.500M4.500 8V3M6.500 8V4.500" /></svg>
                <ViewName>View: Original</ViewName>
                <Push />
                <svg width="11" height="9" viewBox="0 0 11 9" {...thin}><path d="M.5 4.500q5-7.500 10 0q-5 7.500-10 0z" /><circle cx="5.500" cy="4.500" r="1.500" /></svg>
                <Crumb $w={48} $pad={2}>Watch ▾</Crumb>
                <Bar $c="#6d96b0" $h={12} />
                <Slot $w={94} $pad={15}>
                  <svg width="72" height="12" viewBox="0 0 72 12" {...thin}><path d="M1 1h7v3M1 1v6h2M5 5h7v5H5zM25 1h9v6h-3M25 1v6h3M29.500 5v6M28 9l1.500 2L31 9" /><path d="M37 5h4l-2 3z" fill="#fff" stroke="none" /><path d="M57 1h9v9h-9zM55 3v-2.500h3M65 .5h3V3M55 8v3h3M68 8v3h-3" /></svg>
                </Slot>
                <Share><svg width="8" height="8" viewBox="0 0 8 8" {...thin}><circle cx="1.800" cy="4" r="1.200" /><circle cx="6.200" cy="1.600" r="1" /><circle cx="6.200" cy="6.400" r="1" /><path d="M3 3.500l2.300-1.400M3 4.500l2.300 1.400" /></svg>Share</Share>
              </Ribbon>
              <Canvas><Dashboard /></Canvas>
            </Main>
          </Body>
          <BottomShade />
        </Window>
        <DockArea>
          <Dock>
            <DockApps list={APPS_LEFT} />
            <DockRule><i /></DockRule>
            <DockApps list={APPS_RIGHT} />
            <DockRule><i /></DockRule>
            <DockApps list={APPS_END} />
          </Dock>
        </DockArea>
      </Desktop>
    </>
  );
}
